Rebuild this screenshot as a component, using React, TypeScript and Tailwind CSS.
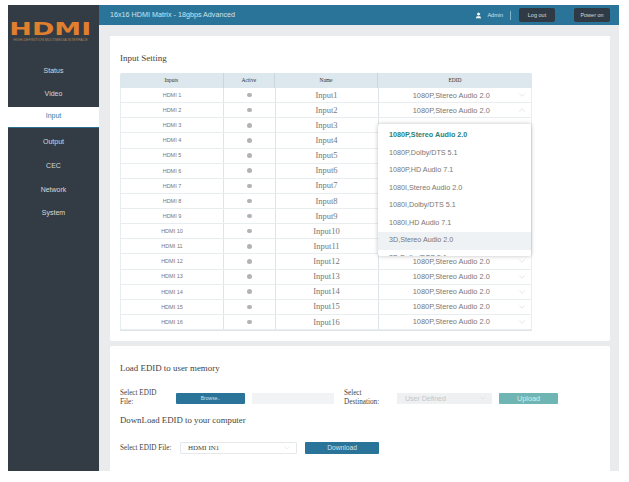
import { ChevronDown, ChevronUp, User } from 'lucide-react';

const menu = ['Status', 'Video', 'Input', 'Output', 'CEC', 'Network', 'System'];
const options = [
  '1080P,Stereo Audio 2.0',
  '1080P,Dolby/DTS 5.1',
  '1080P,HD Audio 7.1',
  '1080I,Stereo Audio 2.0',
  '1080I,Dolby/DTS 5.1',
  '1080I,HD Audio 7.1',
  '3D,Stereo Audio 2.0',
  '3D,Dolby/DTS 5.1',
];
const inputs = Array.from({ length: 16 }, (_, i) => i + 1);

function Sidebar() {
  return (
    <aside className="w-[91px] shrink-0 bg-[#333c44] font-['Liberation_Sans',sans-serif]">
      <div className="h-[54px] pt-[17px] pr-[6px] flex flex-col items-center">
        <span className="text-[#e07f2e] text-[18px] leading-[14px] font-bold font-['DejaVu_Sans',sans-serif] scale-x-[1.5]">HDMI</span>
        <span className="mt-[2px] text-[#a98358] text-[3.6px] leading-[4px] whitespace-nowrap">HIGH-DEFINITION MULTIMEDIA INTERFACE</span>
      </div>
      <nav className="flex flex-col">
        {menu.map(item => (
          <div key={item} className="h-[23.8px] flex items-center justify-center text-[7px]">
            {item === 'Input' ? (
              <span className="self-start w-full h-[21px] bg-white border-b border-[#2b6f92] flex items-center justify-center text-[#2f7fa3]">{item}</span>
            ) : (
              <span className="text-[#d5d9dc]">{item}</span>
            )}
          </div>
        ))}
      </nav>
    </aside>
  );
}

function Header() {
  return (
    <header className="h-[20px] shrink-0 bg-[#2b7499] flex items-center pl-[11px] pr-[9px] font-['Liberation_Sans',sans-serif] text-[#cfe3ec]">
      <span className="text-[7.2px]">16x16 HDMI Matrix - 18gbps Advanced</span>
      <User className="ml-auto w-[7px] h-[7px] text-white fill-white" />
      <span className="ml-[5px] text-[5.5px]">Admin</span>
      <span className="ml-[7px] w-px h-[9px] bg-[#7fb4cc]" />
      <button className="ml-[8px] w-[36px] h-[14px] rounded-[2px] bg-[#2f3a45] text-[5.5px] text-[#d5d9dc]">Log out</button>
      <button className="ml-[19px] w-[36px] h-[14px] rounded-[2px] bg-[#2f3a45] text-[5.5px] text-[#d5d9dc]">Power on</button>
    </header>
  );
}

function EdidDropdown() {
  return (
    <div className="absolute left-[258px] top-[51px] w-[153px] h-[132px] pt-[3px] overflow-hidden bg-white rounded-[2px] shadow-[0_0_4px_rgba(0,0,0,0.25)] font-['Liberation_Sans',sans-serif] text-[7.2px] text-[#777]">
      {options.map((o, i) => (
        <div
          key={o}
          className={
            'h-[17.5px] pl-[11px] flex items-center ' +
            (i === 0 ? 'font-bold text-[#2b7f78] ' : '') +
            (i === 6 ? 'bg-[#eff2f4]' : '')
          }
        >
          {o}
        </div>
      ))}
    </div>
  );
}

function InputTable() {
  return (
    <div className="relative w-[412px] mt-[9px] border-b border-[#dde5e9]">
      <div className="h-[15px] flex rounded-t-[2px] bg-[#dce8ed] font-['Liberation_Serif',serif] text-[5.5px] text-[#333]">
        <div className="w-[103.5px] flex items-center justify-center border-r border-[#c9d6dc]">Inputs</div>
        <div className="w-[51.5px] flex items-center justify-center border-r border-[#c9d6dc]">Active</div>
        <div className="w-[103px] flex items-center justify-center border-r border-[#c9d6dc]">Name</div>
        <div className="flex-1 flex items-center justify-center">EDID</div>
      </div>
      {inputs.map(n => (
        <div key={n} className="h-[15.13px] flex border-b border-[#e8edf0] border-x text-[#777]">
          <div className="w-[103px] flex items-center justify-center border-r border-[#dde5e9] font-['Liberation_Sans',sans-serif] text-[5.5px]">HDMI {n}</div>
          <div className="w-[51.5px] flex items-center justify-center border-r border-[#dde5e9]">
            <span className="w-[4.5px] h-[4.5px] rounded-full bg-[#b0b3b6]" />
          </div>
          <div className="w-[103px] flex items-center justify-center border-r border-[#dde5e9] font-['Liberation_Serif',serif] text-[8.5px]">Input{n}</div>
          {/* rows 3 to 11 sit behind the open dropdown */}
          {n >= 3 && n <= 11 ? (
            <div className="flex-1" />
          ) : (
            <div className="relative flex-1 pr-[7px] flex items-center justify-center font-['Liberation_Sans',sans-serif] text-[7.4px] text-[#777]">
              1080P,Stereo Audio 2.0
              {n === 2 ? (
                <ChevronUp className="absolute right-[4px] w-[10px] h-[10px] text-[#bcc4c9]" strokeWidth={1} />
              ) : (
                <ChevronDown className="absolute right-[4px] w-[10px] h-[10px] text-[#bcc4c9]" strokeWidth={1} />
              )}
            </div>
          )}
        </div>
      ))}
      <EdidDropdown />
    </div>
  );
}

function LoadEdid() {
  return (
    <section className="h-[125px] bg-white rounded-t-[2px] px-[10px] pt-[16px] font-['Liberation_Serif',serif] text-[#444]">
      <h2 className="text-[8.9px] leading-[12px]">Load EDID to user memory</h2>
      <div className="mt-[16px] h-[16px] flex items-center text-[7.2px] leading-[9px]">
        <span className="w-[50px]">Select EDID File:</span>
        <button className="ml-[6px] w-[69px] h-[11px] rounded-[1px] bg-[#2b7499] text-[5px] text-[#cfe3ec] font-['Liberation_Sans',sans-serif]">Browse..</button>
        <span className="ml-[7px] w-[82px] h-[11px] bg-[#f1f3f5]" />
        <span className="ml-[10px] w-[42px]">Select Destination:</span>
        <div className="ml-[11px] w-[95px] h-[11px] pl-[8px] pr-[5px] flex items-center justify-between bg-[#eef0f2] text-[#c2c6ca] text-[7px] font-['Liberation_Sans',sans-serif]">
          User Defined
          <ChevronDown className="w-[8px] h-[8px]" strokeWidth={1} />
        </div>
        <button className="ml-[7px] w-[59px] h-[11px] rounded-[1px] bg-[#6fb5b3] text-[#d9eeee] font-['Liberation_Sans',sans-serif]">Upload</button>
      </div>
      <h2 className="mt-[8px] text-[8.8px] leading-[12px]">DownLoad EDID to your computer</h2>
      <div className="mt-[16px] h-[12px] flex items-center text-[7.2px]">
        <span className="w-[60px]">Select EDID File:</span>
        <div className="w-[117px] h-[12px] pl-[7px] pr-[5px] flex items-center justify-between border border-[#e6e9eb] rounded-[1px] text-[7px]">
          HDMI IN1
          <ChevronDown className="w-[8px] h-[8px] text-[#c4cbd0]" strokeWidth={1} />
        </div>
        <button className="ml-[8px] w-[74px] h-[12px] rounded-[1px] bg-[#2b7499] text-[6.7px] text-[#cfe3ec] font-['Liberation_Sans',sans-serif]">Download</button>
      </div>
    </section>
  );
}

export default function App() {
  return (
    <div className="w-[629px] h-[482px] bg-white pt-[5px] pl-[8px]">
      <div className="w-[611px] h-[466px] flex">
        <Sidebar />
        <main className="flex-1 flex flex-col bg-[#e9ebed]">
          <Header />
          <div className="flex-1 flex flex-col gap-[5px] pt-[11px] px-[11px] pr-[9px]">
            <section className="h-[305px] bg-white rounded-b-[2px] px-[10px] pt-[16px]">
              <h1 className="font-['Liberation_Serif',serif] text-[9px] leading-[12px] text-[#444]">Input Setting</h1>
              <InputTable />
            </section>
            <LoadEdid />
          </div>
        </main>
      </div>
    </div>
  );
}
